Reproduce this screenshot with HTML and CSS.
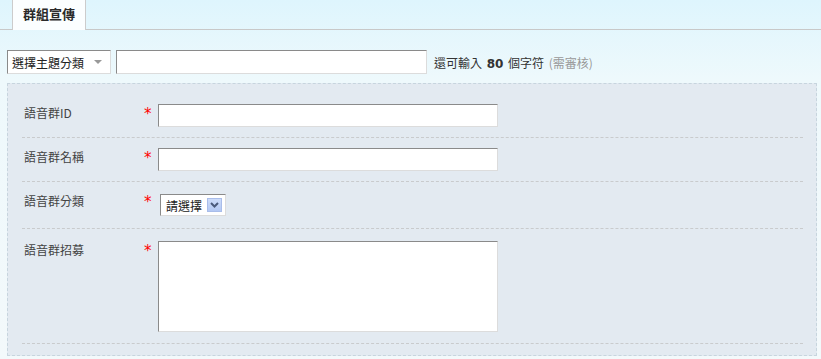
FILE: index.html
```html
<!DOCTYPE html>
<html lang="zh-Hant">
<head>
  <meta charset="UTF-8">
  <title>群組宣傳</title>
  <link rel="stylesheet" href="styles.css">
</head>
<body>

  <div class="tabs">
    <div class="tab">群組宣傳</div>
  </div>

  <div class="toolbar">
    <div class="pick">
      <span>選擇主題分類</span>
      <span class="caret"></span>
    </div>
    <input type="text" class="topic">
    <span class="hint">還可輸入 <b>80</b> 個字符 <em>(需審核)</em></span>
  </div>

  <div class="panel">
    <div class="row first">
      <label>語音群ID</label>
      <span class="req">*</span>
      <input type="text" class="field">
    </div>
    <div class="row">
      <label>語音群名稱</label>
      <span class="req">*</span>
      <input type="text" class="field">
    </div>
    <div class="row third">
      <label>語音群分類</label>
      <span class="req">*</span>
      <div class="choose">
        <span>請選擇</span>
        <span class="drop">
          <svg width="9" height="6" viewBox="0 0 9 6">
            <path d="M1 1 L4.5 4.5 L8 1" fill="none" stroke="#4a5a7c" stroke-width="2"/>
          </svg>
        </span>
      </div>
    </div>
    <div class="row last">
      <label>語音群招募</label>
      <span class="req">*</span>
      <textarea class="field area"></textarea>
    </div>
  </div>

</body>
</html>
```

FILE: styles.css
```css
body {
  margin: 0;
  font-family: "Noto Sans CJK TC", "DejaVu Sans", sans-serif;
  font-size: 12px;
  color: #333;
  background: linear-gradient(#def5fd, #eef9fc 80px, #f3f9fb);
  min-height: 359px;
}
.tabs {
  height: 29px;
  width: 817px;
  border-bottom: 1px solid #c8c8c8;
  padding-left: 12px;
  box-sizing: content-box;
}
.tab {
  width: 72px;
  height: 30px;
  line-height: 28px;
  background: #fbfeff;
  border-left: 1px solid #ccc;
  border-right: 1px solid #ccc;
  text-align: center;
  font-weight: bold;
  font-size: 13px;
  color: #2a2a2a;
}
.toolbar {
  display: flex;
  align-items: center;
  margin: 20px 0 0 7px;
  height: 24px;
}
.pick {
  height: 22px;
  border: 1px solid;
  border-color: #8a8a8a #dcdcdc #dcdcdc #8a8a8a;
  background: #fff;
  display: flex;
  align-items: center;
  justify-content: space-between;
  padding: 0 8px 0 4px;
  box-sizing: content-box;
  width: 90px;
  color: #222;
}
.caret {
  border-left: 4px solid transparent;
  border-right: 4px solid transparent;
  border-top: 4px solid #999;
}
.topic {
  margin-left: 5px;
  width: 309px;
  height: 22px;
  padding: 0;
  border: 1px solid;
  border-color: #8a8a8a #dcdcdc #dcdcdc #8a8a8a;
}
.hint {
  margin-left: 7px;
  word-spacing: 2px;
}
.hint b {
  font-family: "DejaVu Sans", sans-serif;
}
.hint em {
  font-style: normal;
  color: #999;
}
.panel {
  margin: 9px 0 0 7px;
  width: 808px;
  height: 271px;
  border: 1px dashed #c7d5de;
  background: #e3eaf1;
}
.row {
  display: flex;
  align-items: flex-start;
  margin: 0 13px 0 14px;
  padding: 10px 0;
  border-bottom: 1px dashed #c9cbcd;
}
.row.first {
  padding-top: 20px;
}
.row.third {
  padding-bottom: 12px;
}
.row.last {
  padding-top: 12px;
  padding-bottom: 11px;
}
label {
  width: 120px;
  padding-left: 2px;
  line-height: 18px;
  color: #444;
}
.req {
  width: 14px;
  color: #f00;
  font-size: 15px;
  line-height: 20px;
  font-family: "DejaVu Sans", sans-serif;
}
.field {
  width: 338px;
  height: 21px;
  padding: 0;
  margin: 0;
  border: 1px solid;
  border-color: #8a8a8a #dcdcdc #dcdcdc #8a8a8a;
  background: #fff;
}
.area {
  height: 89px;
  resize: none;
  display: block;
}
.choose {
  margin: 2px 0 0 2px;
  border: 1px solid;
  border-color: #8a8a8a #dcdcdc #dcdcdc #8a8a8a;
  background: #fff;
  display: flex;
  align-items: center;
  justify-content: space-between;
  padding: 0 3px 0 5px;
  box-sizing: border-box;
  width: 66px;
  height: 22px;
  color: #222;
}
.drop {
  width: 15px;
  height: 14px;
  background: linear-gradient(#cddcfa, #b3c8f3);
  border: 1px solid #a9bdea;
  box-sizing: border-box;
  display: flex;
  align-items: center;
  justify-content: center;
}
```
